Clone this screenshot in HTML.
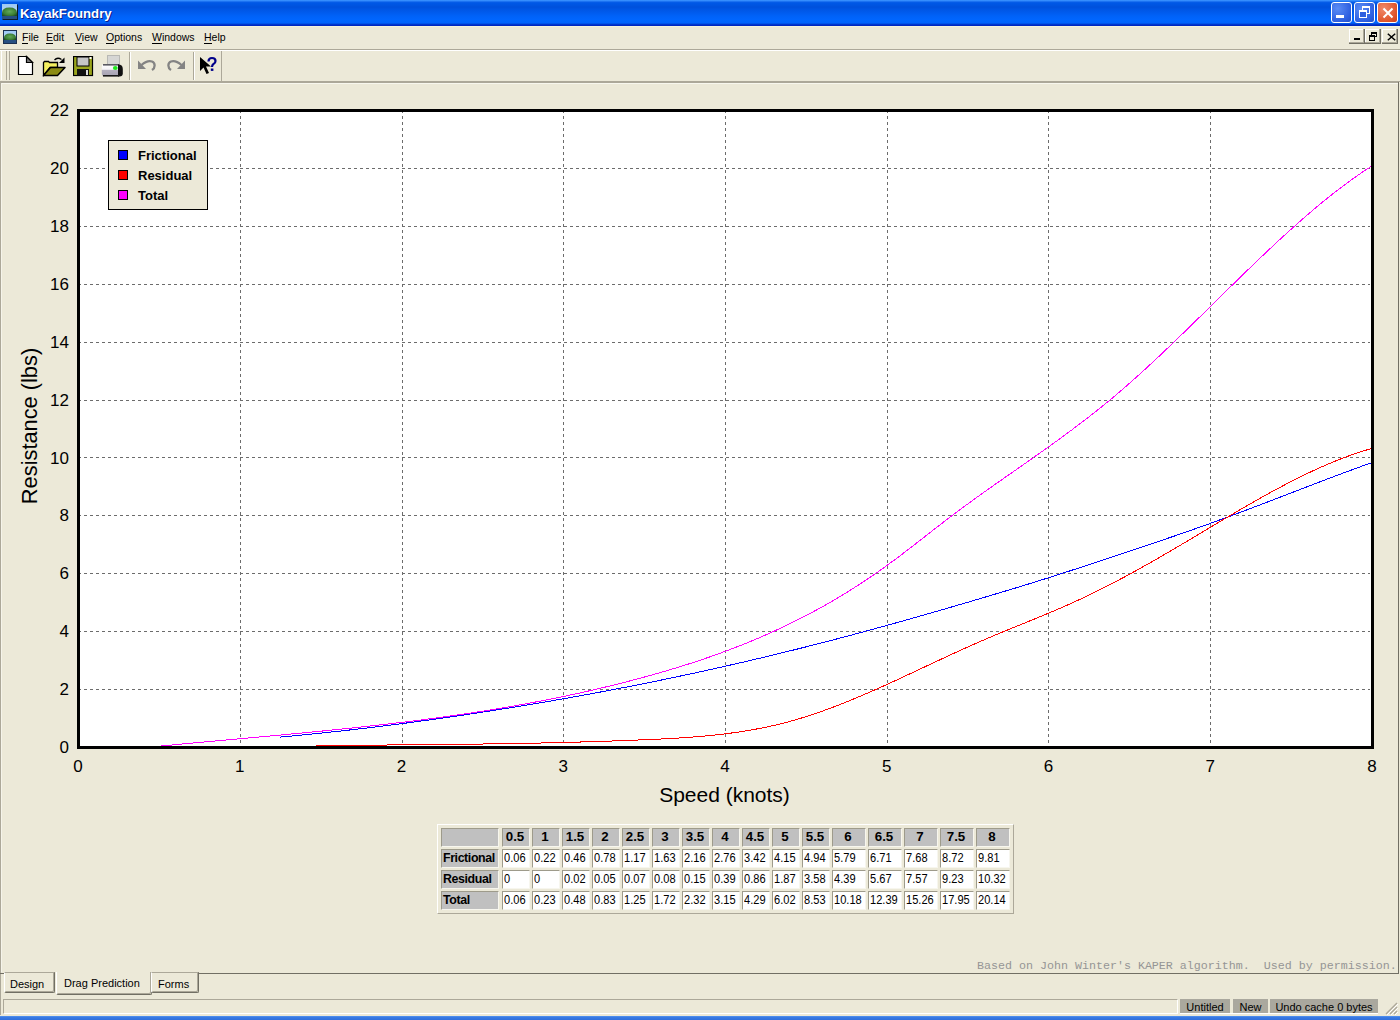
<!DOCTYPE html>
<html><head><meta charset="utf-8"><title>KayakFoundry</title>
<style>
*{box-sizing:border-box}
html,body{margin:0;padding:0}
body{width:1400px;height:1020px;overflow:hidden;position:relative;background:#ECE9D8;font-family:"Liberation Sans",sans-serif;color:#000}
.abs{position:absolute}
.title{left:0;top:0;width:1400px;height:26px;background:linear-gradient(#3D95FF 0px,#2E85FA 1px,#0A5FE8 2px,#0058E6 3px,#0053DF 6px,#0050DB 7px,#0055E3 9px,#005CEF 13px,#0062F8 16px,#0066FF 20px,#0063FC 23px,#0046D8 24px,#0027C2 25px,#0027C2 26px)}
.ttext{left:20px;top:6px;font:bold 13.2px "Liberation Sans",sans-serif;color:#fff;text-shadow:1px 1px 0 #0A1E8C;letter-spacing:0px}
.tb{top:2px;width:21px;height:21px;border:1px solid #fff;border-radius:3px}
.menu{font-size:10.5px;top:31px}
.menu u{text-decoration:none;border-bottom:1px solid #000}
.sep{width:1px;background:#ACA899}
.ax{font-size:17px;fill:#000}
.at{font-size:21px;fill:#000}
.at2{font-size:21.8px;fill:#000}
.lg{font-size:13px;font-weight:bold;fill:#000}
.tbl{border-top:1px solid #fff;border-left:1px solid #fff;border-right:1px solid #ACA899;border-bottom:1px solid #ACA899}
.c{position:absolute;height:19px;border-top:1px solid #9E9B8B;border-left:1px solid #9E9B8B;border-right:1px solid #F7F6EE;border-bottom:1px solid #F7F6EE;font-size:11.3px;line-height:16px;padding-left:2px;white-space:nowrap;overflow:hidden}
.h{background:#C0C0C0;font-weight:bold;font-size:12.4px}
.hc{text-align:center;padding-left:0;padding-right:2px}
.hr{letter-spacing:-0.4px;padding-left:1px}
.d{background:#fff;font-size:12.5px;padding-left:1px}
.s{display:inline-block;transform:scaleX(0.885);transform-origin:0 50%}
.hc{font-size:13.3px}
.tab{font-size:11px}
.stp{background:#AAA89E;font-size:11px;top:999px;height:14px;line-height:16px;text-align:center}
</style></head><body>

<svg class="abs" style="left:0;top:0" width="1400" height="820" viewBox="0 0 1400 820"><rect x="78.5" y="110.5" width="1294" height="637" fill="#fff"/><g shape-rendering="crispEdges"><line x1="240.5" y1="110" x2="240.5" y2="746" stroke="#6c6c6c" stroke-dasharray="3 3"/><line x1="402.5" y1="110" x2="402.5" y2="746" stroke="#6c6c6c" stroke-dasharray="3 3"/><line x1="563.5" y1="110" x2="563.5" y2="746" stroke="#6c6c6c" stroke-dasharray="3 3"/><line x1="725.5" y1="110" x2="725.5" y2="746" stroke="#6c6c6c" stroke-dasharray="3 3"/><line x1="887.5" y1="110" x2="887.5" y2="746" stroke="#6c6c6c" stroke-dasharray="3 3"/><line x1="1048.5" y1="110" x2="1048.5" y2="746" stroke="#6c6c6c" stroke-dasharray="3 3"/><line x1="1210.5" y1="110" x2="1210.5" y2="746" stroke="#6c6c6c" stroke-dasharray="3 3"/><line x1="78" y1="689.5" x2="1370" y2="689.5" stroke="#6c6c6c" stroke-dasharray="3 3"/><line x1="78" y1="631.5" x2="1370" y2="631.5" stroke="#6c6c6c" stroke-dasharray="3 3"/><line x1="78" y1="573.5" x2="1370" y2="573.5" stroke="#6c6c6c" stroke-dasharray="3 3"/><line x1="78" y1="515.5" x2="1370" y2="515.5" stroke="#6c6c6c" stroke-dasharray="3 3"/><line x1="78" y1="457.5" x2="1370" y2="457.5" stroke="#6c6c6c" stroke-dasharray="3 3"/><line x1="78" y1="400.5" x2="1370" y2="400.5" stroke="#6c6c6c" stroke-dasharray="3 3"/><line x1="78" y1="342.5" x2="1370" y2="342.5" stroke="#6c6c6c" stroke-dasharray="3 3"/><line x1="78" y1="284.5" x2="1370" y2="284.5" stroke="#6c6c6c" stroke-dasharray="3 3"/><line x1="78" y1="226.5" x2="1370" y2="226.5" stroke="#6c6c6c" stroke-dasharray="3 3"/><line x1="78" y1="168.5" x2="1370" y2="168.5" stroke="#6c6c6c" stroke-dasharray="3 3"/></g><defs><clipPath id="pc"><rect x="80" y="112" width="1291" height="634"/></clipPath></defs><g clip-path="url(#pc)"><path d="M280.19 737.09 L288.27 736.35 L296.36 735.59 L304.45 734.80 L312.54 733.99 L320.62 733.16 L328.71 732.31 L336.80 731.43 L344.89 730.54 L352.98 729.62 L361.06 728.68 L369.15 727.72 L377.24 726.74 L385.33 725.73 L393.41 724.71 L401.50 723.67 L409.59 722.60 L417.68 721.52 L425.76 720.42 L433.85 719.29 L441.94 718.15 L450.02 716.99 L458.11 715.81 L466.20 714.61 L474.29 713.39 L482.38 712.16 L490.46 710.90 L498.55 709.63 L506.64 708.34 L514.73 707.04 L522.81 705.71 L530.90 704.36 L538.99 703.00 L547.08 701.62 L555.16 700.22 L563.25 698.80 L571.34 697.36 L579.42 695.90 L587.51 694.42 L595.60 692.93 L603.69 691.41 L611.78 689.88 L619.86 688.32 L627.95 686.75 L636.04 685.15 L644.12 683.54 L652.21 681.90 L660.30 680.25 L668.39 678.57 L676.48 676.88 L684.56 675.16 L692.65 673.43 L700.74 671.67 L708.83 669.89 L716.91 668.09 L725.00 666.27 L733.09 664.43 L741.17 662.57 L749.26 660.69 L757.35 658.78 L765.44 656.86 L773.53 654.91 L781.61 652.94 L789.70 650.95 L797.79 648.94 L805.88 646.90 L813.96 644.84 L822.05 642.77 L830.14 640.67 L838.23 638.55 L846.31 636.41 L854.40 634.25 L862.49 632.07 L870.58 629.87 L878.66 627.66 L886.75 625.43 L894.84 623.18 L902.93 620.92 L911.01 618.64 L919.10 616.34 L927.19 614.04 L935.28 611.71 L943.36 609.38 L951.45 607.03 L959.54 604.67 L967.62 602.30 L975.71 599.92 L983.80 597.52 L991.89 595.11 L999.98 592.69 L1008.06 590.25 L1016.15 587.79 L1024.24 585.31 L1032.33 582.81 L1040.41 580.29 L1048.50 577.74 L1056.59 575.17 L1064.68 572.57 L1072.76 569.96 L1080.85 567.32 L1088.94 564.67 L1097.03 562.01 L1105.11 559.33 L1113.20 556.64 L1121.29 553.94 L1129.38 551.24 L1137.46 548.53 L1145.55 545.81 L1153.64 543.09 L1161.73 540.34 L1169.81 537.59 L1177.90 534.81 L1185.99 532.00 L1194.08 529.17 L1202.16 526.31 L1210.25 523.41 L1218.34 520.47 L1226.43 517.50 L1234.51 514.50 L1242.60 511.48 L1250.69 508.42 L1258.78 505.35 L1266.86 502.26 L1274.95 499.16 L1283.04 496.05 L1291.12 492.93 L1299.21 489.81 L1307.30 486.70 L1315.39 483.59 L1323.48 480.50 L1331.56 477.42 L1339.65 474.38 L1347.74 471.37 L1355.83 468.39 L1363.91 465.46 L1372.00 462.58" fill="none" stroke="#0000ff" stroke-width="1" shape-rendering="crispEdges"/><path d="M315.77 745.58 L323.86 745.51 L331.95 745.44 L340.04 745.38 L348.12 745.31 L356.21 745.25 L364.30 745.18 L372.38 745.12 L380.47 745.06 L388.56 744.99 L396.65 744.92 L404.74 744.86 L412.82 744.79 L420.91 744.72 L429.00 744.64 L437.08 744.56 L445.17 744.48 L453.26 744.39 L461.35 744.29 L469.44 744.20 L477.52 744.09 L485.61 743.98 L493.70 743.86 L501.79 743.73 L509.87 743.60 L517.96 743.46 L526.05 743.31 L534.13 743.14 L542.22 742.97 L550.31 742.79 L558.40 742.60 L566.49 742.39 L574.57 742.18 L582.66 741.95 L590.75 741.71 L598.83 741.45 L606.92 741.19 L615.01 740.90 L623.10 740.60 L631.18 740.29 L639.27 739.96 L647.36 739.62 L655.45 739.25 L663.53 738.86 L671.62 738.42 L679.71 737.94 L687.80 737.39 L695.88 736.78 L703.97 736.09 L712.06 735.31 L720.15 734.43 L728.24 733.45 L736.32 732.35 L744.41 731.12 L752.50 729.76 L760.58 728.25 L768.67 726.58 L776.76 724.75 L784.85 722.75 L792.93 720.56 L801.02 718.18 L809.11 715.63 L817.20 712.92 L825.28 710.05 L833.37 707.05 L841.46 703.92 L849.55 700.67 L857.63 697.31 L865.72 693.86 L873.81 690.33 L881.90 686.72 L889.99 683.06 L898.07 679.34 L906.16 675.59 L914.25 671.82 L922.33 668.02 L930.42 664.23 L938.51 660.44 L946.60 656.68 L954.68 652.94 L962.77 649.25 L970.86 645.61 L978.95 642.04 L987.03 638.54 L995.12 635.12 L1003.21 631.75 L1011.30 628.43 L1019.38 625.13 L1027.47 621.84 L1035.56 618.54 L1043.65 615.20 L1051.73 611.82 L1059.82 608.37 L1067.91 604.84 L1076.00 601.20 L1084.09 597.45 L1092.17 593.57 L1100.26 589.57 L1108.35 585.46 L1116.43 581.25 L1124.52 576.94 L1132.61 572.55 L1140.70 568.07 L1148.79 563.52 L1156.87 558.90 L1164.96 554.23 L1173.05 549.50 L1181.13 544.73 L1189.22 539.93 L1197.31 535.11 L1205.40 530.28 L1213.49 525.45 L1221.57 520.63 L1229.66 515.84 L1237.75 511.09 L1245.84 506.39 L1253.92 501.74 L1262.01 497.18 L1270.10 492.69 L1278.18 488.30 L1286.27 484.03 L1294.36 479.87 L1302.45 475.84 L1310.54 471.96 L1318.62 468.23 L1326.71 464.67 L1334.80 461.29 L1342.88 458.10 L1350.97 455.12 L1359.06 452.35 L1367.15 449.80 L1375.24 447.50" fill="none" stroke="#ff0000" stroke-width="1" shape-rendering="crispEdges"/><path d="M158.88 746.25 L166.96 745.47 L175.05 744.70 L183.14 743.94 L191.22 743.19 L199.31 742.44 L207.40 741.70 L215.49 740.96 L223.58 740.23 L231.66 739.49 L239.75 738.76 L247.84 738.03 L255.93 737.29 L264.01 736.55 L272.10 735.81 L280.19 735.06 L288.27 734.30 L296.36 733.54 L304.45 732.76 L312.54 731.98 L320.62 731.19 L328.71 730.38 L336.80 729.56 L344.89 728.73 L352.98 727.88 L361.06 727.01 L369.15 726.13 L377.24 725.22 L385.33 724.30 L393.41 723.35 L401.50 722.39 L409.59 721.39 L417.68 720.38 L425.76 719.33 L433.85 718.26 L441.94 717.16 L450.02 716.04 L458.11 714.88 L466.20 713.69 L474.29 712.46 L482.38 711.21 L490.46 709.91 L498.55 708.58 L506.64 707.22 L514.73 705.81 L522.81 704.37 L530.90 702.88 L538.99 701.35 L547.08 699.78 L555.16 698.16 L563.25 696.50 L571.34 694.79 L579.42 693.04 L587.51 691.23 L595.60 689.38 L603.69 687.47 L611.78 685.51 L619.86 683.50 L627.95 681.43 L636.04 679.31 L644.12 677.13 L652.21 674.89 L660.30 672.59 L668.39 670.22 L676.48 667.78 L684.56 665.26 L692.65 662.67 L700.74 659.99 L708.83 657.23 L716.91 654.37 L725.00 651.42 L733.09 648.36 L741.17 645.21 L749.26 641.94 L757.35 638.56 L765.44 635.06 L773.53 631.44 L781.61 627.69 L789.70 623.82 L797.79 619.81 L805.88 615.66 L813.96 611.37 L822.05 606.93 L830.14 602.34 L838.23 597.59 L846.31 592.69 L854.40 587.62 L862.49 582.38 L870.58 576.97 L878.66 571.38 L886.75 565.61 L894.84 559.67 L902.93 553.57 L911.01 547.37 L919.10 541.10 L927.19 534.79 L935.28 528.49 L943.36 522.24 L951.45 516.07 L959.54 510.01 L967.62 504.05 L975.71 498.18 L983.80 492.39 L991.89 486.66 L999.98 480.97 L1008.06 475.31 L1016.15 469.67 L1024.24 464.02 L1032.33 458.35 L1040.41 452.65 L1048.50 446.90 L1056.59 441.08 L1064.68 435.19 L1072.76 429.20 L1080.85 423.10 L1088.94 416.88 L1097.03 410.51 L1105.11 403.99 L1113.20 397.29 L1121.29 390.42 L1129.38 383.37 L1137.46 376.16 L1145.55 368.81 L1153.64 361.34 L1161.73 353.75 L1169.81 346.06 L1177.90 338.29 L1185.99 330.45 L1194.08 322.56 L1202.16 314.64 L1210.25 306.69 L1218.34 298.73 L1226.43 290.78 L1234.51 282.85 L1242.60 274.95 L1250.69 267.11 L1258.78 259.34 L1266.86 251.64 L1274.95 244.05 L1283.04 236.56 L1291.12 229.21 L1299.21 221.99 L1307.30 214.93 L1315.39 208.04 L1323.48 201.34 L1331.56 194.84 L1339.65 188.55 L1347.74 182.50 L1355.83 176.69 L1363.91 171.14 L1372.00 165.87" fill="none" stroke="#ff00ff" stroke-width="1" shape-rendering="crispEdges"/></g><rect x="78.5" y="110.5" width="1294" height="637" fill="none" stroke="#000" stroke-width="3" shape-rendering="crispEdges"/><rect x="108.5" y="140.5" width="99" height="69" fill="#ECE9D8" stroke="#000" stroke-width="1" shape-rendering="crispEdges"/><rect x="118.5" y="150.5" width="9" height="9" fill="#0000ff" stroke="#000" shape-rendering="crispEdges"/><text x="138" y="160" class="lg">Frictional</text><rect x="118.5" y="170.5" width="9" height="9" fill="#ff0000" stroke="#000" shape-rendering="crispEdges"/><text x="138" y="180" class="lg">Residual</text><rect x="118.5" y="190.5" width="9" height="9" fill="#ff00ff" stroke="#000" shape-rendering="crispEdges"/><text x="138" y="200" class="lg">Total</text><text x="69" y="753.0" class="ax" text-anchor="end">0</text><text x="69" y="695.1" class="ax" text-anchor="end">2</text><text x="69" y="637.2" class="ax" text-anchor="end">4</text><text x="69" y="579.3" class="ax" text-anchor="end">6</text><text x="69" y="521.4" class="ax" text-anchor="end">8</text><text x="69" y="463.5" class="ax" text-anchor="end">10</text><text x="69" y="405.6" class="ax" text-anchor="end">12</text><text x="69" y="347.6" class="ax" text-anchor="end">14</text><text x="69" y="289.7" class="ax" text-anchor="end">16</text><text x="69" y="231.8" class="ax" text-anchor="end">18</text><text x="69" y="173.9" class="ax" text-anchor="end">20</text><text x="69" y="116.0" class="ax" text-anchor="end">22</text><text x="78.0" y="771.5" class="ax" text-anchor="middle">0</text><text x="239.8" y="771.5" class="ax" text-anchor="middle">1</text><text x="401.5" y="771.5" class="ax" text-anchor="middle">2</text><text x="563.2" y="771.5" class="ax" text-anchor="middle">3</text><text x="725.0" y="771.5" class="ax" text-anchor="middle">4</text><text x="886.8" y="771.5" class="ax" text-anchor="middle">5</text><text x="1048.5" y="771.5" class="ax" text-anchor="middle">6</text><text x="1210.2" y="771.5" class="ax" text-anchor="middle">7</text><text x="1372.0" y="771.5" class="ax" text-anchor="middle">8</text><text x="724.5" y="802" class="at" text-anchor="middle">Speed (knots)</text><text x="0" y="0" class="at2" text-anchor="middle" transform="translate(37,426) rotate(-90)">Resistance (lbs)</text></svg>
<div class="abs tbl" style="left:437px;top:824px;width:577px;height:90px"></div><div class="c h hc" style="left:441px;top:828px;width:58px"></div><div class="c h hc" style="left:502px;top:828px;width:28px">0.5</div><div class="c h hc" style="left:532px;top:828px;width:28px">1</div><div class="c h hc" style="left:562px;top:828px;width:28px">1.5</div><div class="c h hc" style="left:592px;top:828px;width:28px">2</div><div class="c h hc" style="left:622px;top:828px;width:28px">2.5</div><div class="c h hc" style="left:652px;top:828px;width:28px">3</div><div class="c h hc" style="left:682px;top:828px;width:28px">3.5</div><div class="c h hc" style="left:712px;top:828px;width:28px">4</div><div class="c h hc" style="left:742px;top:828px;width:28px">4.5</div><div class="c h hc" style="left:772px;top:828px;width:28px">5</div><div class="c h hc" style="left:802px;top:828px;width:28px">5.5</div><div class="c h hc" style="left:832px;top:828px;width:34px">6</div><div class="c h hc" style="left:868px;top:828px;width:34px">6.5</div><div class="c h hc" style="left:904px;top:828px;width:34px">7</div><div class="c h hc" style="left:940px;top:828px;width:34px">7.5</div><div class="c h hc" style="left:976px;top:828px;width:34px">8</div><div class="c h hr" style="left:441px;top:849px;width:58px">Frictional</div><div class="c d" style="left:502px;top:849px;width:28px"><span class="s">0.06</span></div><div class="c d" style="left:532px;top:849px;width:28px"><span class="s">0.22</span></div><div class="c d" style="left:562px;top:849px;width:28px"><span class="s">0.46</span></div><div class="c d" style="left:592px;top:849px;width:28px"><span class="s">0.78</span></div><div class="c d" style="left:622px;top:849px;width:28px"><span class="s">1.17</span></div><div class="c d" style="left:652px;top:849px;width:28px"><span class="s">1.63</span></div><div class="c d" style="left:682px;top:849px;width:28px"><span class="s">2.16</span></div><div class="c d" style="left:712px;top:849px;width:28px"><span class="s">2.76</span></div><div class="c d" style="left:742px;top:849px;width:28px"><span class="s">3.42</span></div><div class="c d" style="left:772px;top:849px;width:28px"><span class="s">4.15</span></div><div class="c d" style="left:802px;top:849px;width:28px"><span class="s">4.94</span></div><div class="c d" style="left:832px;top:849px;width:34px"><span class="s">5.79</span></div><div class="c d" style="left:868px;top:849px;width:34px"><span class="s">6.71</span></div><div class="c d" style="left:904px;top:849px;width:34px"><span class="s">7.68</span></div><div class="c d" style="left:940px;top:849px;width:34px"><span class="s">8.72</span></div><div class="c d" style="left:976px;top:849px;width:34px"><span class="s">9.81</span></div><div class="c h hr" style="left:441px;top:870px;width:58px">Residual</div><div class="c d" style="left:502px;top:870px;width:28px"><span class="s">0</span></div><div class="c d" style="left:532px;top:870px;width:28px"><span class="s">0</span></div><div class="c d" style="left:562px;top:870px;width:28px"><span class="s">0.02</span></div><div class="c d" style="left:592px;top:870px;width:28px"><span class="s">0.05</span></div><div class="c d" style="left:622px;top:870px;width:28px"><span class="s">0.07</span></div><div class="c d" style="left:652px;top:870px;width:28px"><span class="s">0.08</span></div><div class="c d" style="left:682px;top:870px;width:28px"><span class="s">0.15</span></div><div class="c d" style="left:712px;top:870px;width:28px"><span class="s">0.39</span></div><div class="c d" style="left:742px;top:870px;width:28px"><span class="s">0.86</span></div><div class="c d" style="left:772px;top:870px;width:28px"><span class="s">1.87</span></div><div class="c d" style="left:802px;top:870px;width:28px"><span class="s">3.58</span></div><div class="c d" style="left:832px;top:870px;width:34px"><span class="s">4.39</span></div><div class="c d" style="left:868px;top:870px;width:34px"><span class="s">5.67</span></div><div class="c d" style="left:904px;top:870px;width:34px"><span class="s">7.57</span></div><div class="c d" style="left:940px;top:870px;width:34px"><span class="s">9.23</span></div><div class="c d" style="left:976px;top:870px;width:34px"><span class="s">10.32</span></div><div class="c h hr" style="left:441px;top:891px;width:58px">Total</div><div class="c d" style="left:502px;top:891px;width:28px"><span class="s">0.06</span></div><div class="c d" style="left:532px;top:891px;width:28px"><span class="s">0.23</span></div><div class="c d" style="left:562px;top:891px;width:28px"><span class="s">0.48</span></div><div class="c d" style="left:592px;top:891px;width:28px"><span class="s">0.83</span></div><div class="c d" style="left:622px;top:891px;width:28px"><span class="s">1.25</span></div><div class="c d" style="left:652px;top:891px;width:28px"><span class="s">1.72</span></div><div class="c d" style="left:682px;top:891px;width:28px"><span class="s">2.32</span></div><div class="c d" style="left:712px;top:891px;width:28px"><span class="s">3.15</span></div><div class="c d" style="left:742px;top:891px;width:28px"><span class="s">4.29</span></div><div class="c d" style="left:772px;top:891px;width:28px"><span class="s">6.02</span></div><div class="c d" style="left:802px;top:891px;width:28px"><span class="s">8.53</span></div><div class="c d" style="left:832px;top:891px;width:34px"><span class="s">10.18</span></div><div class="c d" style="left:868px;top:891px;width:34px"><span class="s">12.39</span></div><div class="c d" style="left:904px;top:891px;width:34px"><span class="s">15.26</span></div><div class="c d" style="left:940px;top:891px;width:34px"><span class="s">17.95</span></div><div class="c d" style="left:976px;top:891px;width:34px"><span class="s">20.14</span></div>
<!-- title bar -->
<div class="abs title"></div>
<svg class="abs" style="left:2px;top:4px" width="16" height="16" viewBox="0 0 16 16">
<defs><linearGradient id="sky" x1="0" y1="0" x2="0" y2="1"><stop offset="0" stop-color="#9CC8F4"/><stop offset="1" stop-color="#D0E4F0"/></linearGradient>
<radialGradient id="dome" cx="0.5" cy="0.45" r="0.6"><stop offset="0" stop-color="#62A858"/><stop offset="0.65" stop-color="#3E8236"/><stop offset="1" stop-color="#1F4E22"/></radialGradient></defs>
<rect x="0" y="0" width="15" height="15" fill="url(#sky)"/>
<path d="M0 12.5V9Q0 3.5 7.5 3.5Q15 3.5 15 9V12.5Z" fill="url(#dome)"/>
<rect x="0" y="12" width="15" height="3" fill="#264F82"/>
<rect x="15" y="0.5" width="1" height="15.5" fill="#0E1A28"/>
<rect x="0.5" y="15" width="15.5" height="1" fill="#0E1A28"/>
</svg>
<div class="abs ttext">KayakFoundry</div>
<div class="abs tb" style="left:1331px;background:radial-gradient(circle at 30% 30%,#5A8CF5,#2D5FE0 70%,#2350C8)"><div class="abs" style="left:4px;top:12px;width:8px;height:3px;background:#fff"></div></div>
<div class="abs tb" style="left:1354px;background:radial-gradient(circle at 30% 30%,#5A8CF5,#2D5FE0 70%,#2350C8)"><div class="abs" style="left:7px;top:3px;width:8px;height:8px;border:1px solid #fff;border-top-width:2px"></div><div class="abs" style="left:4px;top:7px;width:8px;height:8px;border:1px solid #fff;border-top-width:2px;background:#2D5FE0"></div></div>
<div class="abs tb" style="left:1377px;background:radial-gradient(circle at 30% 30%,#F08A6A,#E0542A 70%,#C8401E)"><svg class="abs" style="left:4px;top:4px" width="12" height="12" viewBox="0 0 12 12"><path d="M1.5 1.5L10.5 10.5M10.5 1.5L1.5 10.5" stroke="#fff" stroke-width="2"/></svg></div>
<!-- menu bar -->
<div class="abs" style="left:0;top:26px;width:1400px;height:23px;background:#ECE9D8"></div>
<div class="abs" style="left:0;top:26px;width:1400px;height:1px;background:#F3F4DE"></div>
<svg class="abs" style="left:3px;top:30px" width="14" height="14" viewBox="0 0 14 14">
<rect x="0" y="0" width="14" height="14" fill="#1B3050"/>
<rect x="1" y="1" width="12" height="12" fill="url(#sky)"/>
<path d="M1 10.5V8Q1 3.5 7 3.5Q13 3.5 13 8V10.5Z" fill="url(#dome)"/>
<rect x="1" y="10" width="12" height="3" fill="#264F82"/>
</svg>
<div class="abs menu" style="left:22px"><u>F</u>ile</div>
<div class="abs menu" style="left:46px"><u>E</u>dit</div>
<div class="abs menu" style="left:75px"><u>V</u>iew</div>
<div class="abs menu" style="left:106px"><u>O</u>ptions</div>
<div class="abs menu" style="left:152px"><u>W</u>indows</div>
<div class="abs menu" style="left:204px"><u>H</u>elp</div>
<!-- mdi buttons -->
<div class="abs" style="left:1349px;top:29px;width:16px;height:15px;border-right:1px solid #716F64;border-bottom:1px solid #716F64;box-shadow:inset -1px -1px 0 #ACA899, inset 1px 1px 0 #fff"><div class="abs" style="left:5px;top:9px;width:6px;height:2px;background:#000"></div></div>
<div class="abs" style="left:1365px;top:29px;width:16px;height:15px;border-right:1px solid #716F64;border-bottom:1px solid #716F64;box-shadow:inset -1px -1px 0 #ACA899, inset 1px 1px 0 #fff"><div class="abs" style="left:6px;top:3px;width:6px;height:5px;border:1px solid #000;border-top-width:2px"></div><div class="abs" style="left:4px;top:6px;width:6px;height:6px;border:1px solid #000;border-top-width:2px;background:#ECE9D8"></div></div>
<div class="abs" style="left:1382px;top:29px;width:16px;height:15px;border-right:1px solid #716F64;border-bottom:1px solid #716F64;box-shadow:inset -1px -1px 0 #ACA899, inset 1px 1px 0 #fff"><svg class="abs" style="left:5px;top:4px" width="9" height="8" viewBox="0 0 9 8"><path d="M0.8 0.8L8.2 7.2M8.2 0.8L0.8 7.2" stroke="#000" stroke-width="1.5"/></svg></div>
<div class="abs" style="left:0;top:49px;width:1400px;height:1px;background:#ACA899"></div>
<div class="abs" style="left:0;top:50px;width:1400px;height:1px;background:#fff"></div>
<!-- toolbar -->
<div class="abs" style="left:221px;top:51px;width:1px;height:30px;background:#ACA899"></div>
<div class="abs" style="left:1px;top:51px;width:1px;height:29px;background:#fff"></div>
<div class="abs" style="left:6px;top:51px;width:1px;height:29px;background:#ACA899"></div>
<div class="abs" style="left:9px;top:51px;width:1px;height:29px;background:#ACA899"></div>
<div class="abs" style="left:129px;top:52px;width:1px;height:28px;background:#ACA899"></div><div class="abs" style="left:130px;top:52px;width:1px;height:28px;background:#fff"></div>
<div class="abs" style="left:193px;top:52px;width:1px;height:28px;background:#ACA899"></div><div class="abs" style="left:194px;top:52px;width:1px;height:28px;background:#fff"></div>
<!-- new -->
<svg class="abs" style="left:17px;top:55px" width="18" height="21" viewBox="0 0 18 21">
<path d="M1.5 1.5H9.5L15.5 7.5V19.5H1.5Z" fill="#fff" stroke="#000" stroke-width="1.2"/>
<path d="M9.5 1.5V7.5H15.5Z" fill="#777" stroke="#000" stroke-width="1.2"/>
</svg>
<!-- open -->
<svg class="abs" style="left:42px;top:56px" width="25" height="21" viewBox="0 0 25 21">
<path d="M1.5 19.5V6.5L2.5 5.5H6.5L7.5 6.5H15.5V11.5H8Z" fill="#F4F060" stroke="#000" stroke-width="1.3"/>
<path d="M1.5 19.5L8.5 11.5H23L15.5 19.5Z" fill="#8C8C14" stroke="#000" stroke-width="1.5" stroke-linejoin="round"/>
<path d="M12.5 4C14.5 1.8 17 1.8 19.5 3.5" fill="none" stroke="#000" stroke-width="1.3"/>
<path d="M22.5 1.5V7H17Z" fill="#000"/>
</svg>
<!-- save -->
<svg class="abs" style="left:73px;top:56px" width="21" height="21" viewBox="0 0 21 21">
<rect x="0.5" y="0.5" width="19" height="19" fill="#9AA51C" stroke="#000" stroke-width="1.2"/>
<rect x="4" y="1" width="12" height="9" fill="#C6C6C6" stroke="#000" stroke-width="1"/>
<rect x="16.5" y="1" width="2" height="2" fill="#fff"/>
<rect x="4" y="13" width="12" height="6.5" fill="#111"/>
<rect x="13" y="14" width="2" height="5" fill="#ddd"/>
</svg>
<!-- print -->
<svg class="abs" style="left:100px;top:55px" width="25" height="22" viewBox="0 0 25 22">
<defs><linearGradient id="pg" x1="0" y1="0" x2="0" y2="1"><stop offset="0" stop-color="#fff"/><stop offset="0.42" stop-color="#F4F2F6"/><stop offset="0.5" stop-color="#B4B0BE"/><stop offset="1" stop-color="#A6A2B2"/></linearGradient></defs>
<rect x="7.5" y="0.5" width="12" height="9" fill="#D6D6D4" stroke="#B8B8B4" stroke-width="1"/>
<path d="M3 9.5H19V21H4Q1.8 21 1.8 19V12Q1.8 9.5 3 9.5Z" fill="url(#pg)"/>
<rect x="3" y="9" width="16" height="1.6" fill="#5A5A62"/>
<path d="M18 9.2Q22.8 9.5 22.8 14V18.5Q22.8 21.5 19.5 21.5H18Z" fill="#111"/>
<rect x="3" y="20" width="16" height="1.6" fill="#1A1A1A"/>
<ellipse cx="15.3" cy="13" rx="2.4" ry="2" fill="#1EE81E"/>
</svg>
<!-- undo / redo -->
<svg class="abs" style="left:136px;top:58px" width="22" height="15" viewBox="0 0 22 15">
<path d="M5.5 7C9 4 13 2.5 16 3.5C19.5 5 19.5 9.5 16 12" fill="none" stroke="#848484" stroke-width="2.3"/>
<path d="M2 2.5V11H10Z" fill="#848484"/>
</svg>
<svg class="abs" style="left:165px;top:58px" width="22" height="15" viewBox="0 0 22 15">
<path d="M16.5 7C13 4 9 2.5 6 3.5C2.5 5 2.5 9.5 6 12" fill="none" stroke="#848484" stroke-width="2.3"/>
<path d="M20 2.5V11H12Z" fill="#848484"/>
</svg>
<!-- help -->
<svg class="abs" style="left:199px;top:56px" width="19" height="20" viewBox="0 0 19 20">
<path d="M1 1L1 15L4.5 11.5L7.5 18L10 17L7 10.5H12Z" fill="#000"/>
<path d="M9.5 5.5Q9.5 2 13 2Q16.5 2 16.5 5Q16.5 7 14.5 8Q13 9 13 11" fill="none" stroke="#00008A" stroke-width="2.2"/>
<rect x="11.8" y="12.5" width="2.6" height="2.4" fill="#00008A"/>
</svg>
<div class="abs" style="left:0;top:81px;width:1400px;height:2px;background:#ACA899"></div>
<!-- main panel borders -->
<div class="abs" style="left:0;top:82px;width:1px;height:933px;background:#ACA899"></div>
<div class="abs" style="left:1px;top:83px;width:1397px;height:1px;background:#F8F7EE"></div>
<div class="abs" style="left:1px;top:83px;width:1px;height:889px;background:#F5F4EA"></div>
<div class="abs" style="left:1398px;top:82px;width:1px;height:892px;background:#716F64"></div>
<div class="abs" style="left:1399px;top:82px;width:1px;height:938px;background:#ECE9D8"></div>
<!-- credits -->
<div class="abs" style="left:977px;top:959px;font:11.67px 'Liberation Mono',monospace;color:#959595;white-space:pre;line-height:14px">Based on John Winter's KAPER algorithm.  Used by permission.</div>
<!-- tabs -->
<div class="abs" style="left:0;top:973px;width:5px;height:1px;background:#716F64"></div>
<div class="abs" style="left:199px;top:973px;width:1200px;height:1px;background:#716F64"></div>
<div class="abs" style="left:4px;top:972px;width:51px;height:21px;border-top:1px solid #ACA899;border-left:1px solid #fff;border-right:1px solid #716F64;border-bottom:1px solid #716F64;border-radius:0 0 2px 2px;background:#ECE9D8;box-shadow:inset -1px -1px 0 #ACA899"></div>
<div class="abs tab" style="left:10px;top:978px">Design</div>
<div class="abs" style="left:56px;top:972px;width:96px;height:23px;border-left:1px solid #fff;border-right:1px solid #716F64;border-bottom:1px solid #716F64;border-radius:0 0 2px 2px;background:#ECE9D8;box-shadow:inset -1px -1px 0 #ACA899"></div>
<div class="abs tab" style="left:64px;top:977px">Drag Prediction</div>
<div class="abs" style="left:151px;top:972px;width:48px;height:21px;border-top:1px solid #ACA899;border-left:1px solid #fff;border-right:1px solid #716F64;border-bottom:1px solid #716F64;border-radius:0 0 2px 2px;background:#ECE9D8;box-shadow:inset -1px -1px 0 #ACA899"></div>
<div class="abs tab" style="left:158px;top:978px">Forms</div>
<!-- status bar -->
<div class="abs" style="left:3px;top:999px;width:1175px;height:15px;border-top:1px solid #ACA899;border-left:1px solid #ACA899;border-bottom:1px solid #fff;border-right:1px solid #fff"></div>
<div class="abs" style="left:1180px;top:1013px;width:198px;height:1px;background:#fff"></div>
<div class="abs stp" style="left:1180px;width:50px">Untitled</div>
<div class="abs stp" style="left:1233px;width:35px">New</div>
<div class="abs stp" style="left:1270px;width:108px">Undo cache 0 bytes</div>
<svg class="abs" style="left:1384px;top:1001px" width="14" height="14" viewBox="0 0 14 14">
<path d="M13 2L2 13M13 6L6 13M13 10L10 13" stroke="#ACA899" stroke-width="1.4"/>
<path d="M14 3L3 14M14 7L7 14M14 11L11 14" stroke="#fff" stroke-width="1"/>
</svg>
<div class="abs" style="left:0;top:1016px;width:1400px;height:4px;background:linear-gradient(#5D9BEF,#3A7BE4 1px,#2F6FDC)"></div>

</body></html>
